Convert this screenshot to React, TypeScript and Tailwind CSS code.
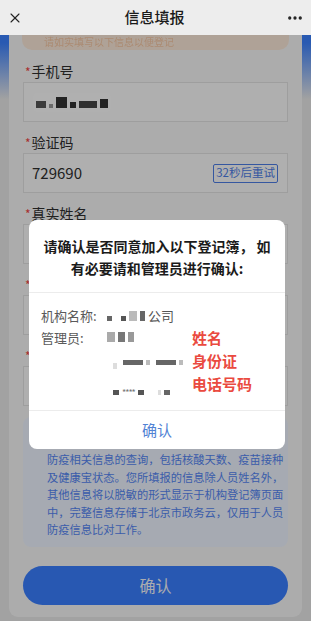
import { X, MoreHorizontal, ChevronRight } from "lucide-react";

const fields = [
  { label: "手机号", kind: "masked" },
  { label: "验证码", kind: "code" },
  { label: "真实姓名", kind: "empty" },
  { label: "身份证号", kind: "select" },
  { label: "所在单位", kind: "empty" },
];

const notice = [
  "防疫相关信息的查询，包括核酸天数、疫苗接种",
  "及健康宝状态。您所填报的信息除人员姓名外，",
  "其他信息将以脱敏的形式显示于机构登记簿页面",
  "中，完整信息存储于北京市政务云，仅用于人员",
  "防疫信息比对工作。",
];

function Mosaic({ cells }: { cells: { w: number; h: number; c: string }[] }) {
  return (
    <div className="flex items-end gap-[3px] blur-[0.6px]">
      {cells.map((cell, i) => (
        <span key={i} className="block" style={{ width: cell.w, height: cell.h, background: cell.c }} />
      ))}
    </div>
  );
}

function Field({ label, kind }: { label: string; kind: string }) {
  return (
    <div className="mb-[10px]">
      <div className="flex h-[21px] items-center text-[14px] leading-[21px] text-[#2e2e2e]">
        <span className="ml-[2px] mr-[1px] text-[12px] text-[#f04444]">*</span>
        <span>{label}</span>
      </div>
      <div className="flex h-[40px] items-center justify-between border border-[#e2e2e2] bg-[#fbfbfb] pl-[8px] pr-[9px]">
        {kind === "masked" && (
          <div className="ml-[1px] rounded-[5px] bg-[#fdfdfd] px-[3px] py-[4px]">
            <Mosaic
              cells={[
                { w: 10, h: 7, c: "#555" },
                { w: 4, h: 4, c: "#999" },
                { w: 11, h: 11, c: "#333" },
                { w: 6, h: 6, c: "#333" },
                { w: 18, h: 7, c: "#444" },
                { w: 8, h: 9, c: "#333" },
              ]}
            />
          </div>
        )}
        {kind === "code" && (
          <>
            <span className="text-[15px] text-[#2e2e2e]">729690</span>
            <span className="flex h-[19px] items-center rounded-[2px] border border-[#4d7de6] px-[2px] text-[11.5px] text-[#4d7de6]">
              32秒后重试
            </span>
          </>
        )}
        {kind === "select" && (
          <ChevronRight className="ml-auto mr-[-5px] h-[10px] w-[10px] text-[#555]" strokeWidth={2.4} />
        )}
      </div>
    </div>
  );
}

export default function App() {
  return (
    <div
      className="relative h-[621px] w-[311px] overflow-hidden bg-[#e8e8e8]"
      style={{ fontFamily: '"Noto Sans CJK SC", "Noto Sans", sans-serif' }}
    >
      <header className="relative z-30 flex h-[35px] items-center justify-between bg-[#ededed] px-[7px]">
        <X className="h-[16px] w-[16px] text-[#222]" strokeWidth={1.6} />
        <span className="text-[15px] font-medium text-[#1a1a1a]">信息填报</span>
        <MoreHorizontal className="h-[18px] w-[18px] text-[#222]" strokeWidth={2.4} />
      </header>

      <main className="h-[586px] bg-[linear-gradient(180deg,#3c82ff_0px,#3c82ff_8px,#e8e8e8_64px)] px-[9px]">
        <div className="rounded-b-[9px] bg-[#f7f7f7] px-[14px] pb-[12px]">
          <div className="mx-[-1px] h-[15px] overflow-hidden rounded-b-[10px] bg-[#fbe9d9] px-[22px] pt-[1px]">
            <p className="text-[10px] leading-[11px] text-[#f2b080] opacity-60">请如实填写以下信息以便登记</p>
          </div>

          <div className="mt-[11px]">
            {fields.map((f) => (
              <Field key={f.label} label={f.label} kind={f.kind} />
            ))}
          </div>

          <div className="mt-[11px] rounded-[8px] bg-[#eef4ff] pb-[8px] pl-[24px] pr-[8px] pt-[7px] text-[11.25px] leading-[17.5px] text-[#5586f4]">
            <div className="h-[27px] whitespace-nowrap">您所提交的信息仅用于本机构登记簿中人员</div>
            {notice.map((line) => (
              <div key={line} className="whitespace-nowrap">
                {line}
              </div>
            ))}
          </div>

          <button className="mt-[19px] flex h-[39px] w-full items-center justify-center rounded-full bg-[#3a7eff] text-[16px] text-[#f4f6fb]">
            确认
          </button>
        </div>
      </main>

      <div className="absolute inset-x-0 bottom-0 top-[35px] z-10 bg-black/30" />

      <div className="absolute left-[29px] top-[220px] z-20 w-[256px] overflow-hidden rounded-[8px] bg-white">
        <div className="px-[12px] pb-[13px] pt-[15px] text-center text-[14px] font-bold leading-[22px] text-[#1b1b1b]">
          <div>请确认是否同意加入以下登记簿， 如</div>
          <div>有必要请和管理员进行确认:</div>
        </div>
        <div className="h-px bg-[#ececec]" />
        <div className="relative h-[117px] pl-[12px] pt-[12px] text-[13px] leading-[22px] text-[#5a5a5a]">
          <div className="flex items-center">
            <span className="w-[66px]">机构名称:</span>
            <div className="flex items-center gap-[3px]">
              <Mosaic
                cells={[
                  { w: 5, h: 5, c: "#666" },
                  { w: 3, h: 3, c: "#fff" },
                  { w: 5, h: 5, c: "#555" },
                  { w: 8, h: 10, c: "#bbb" },
                  { w: 5, h: 10, c: "#666" },
                ]}
              />
              <span className="text-[#555]">公司</span>
            </div>
          </div>
          <div className="flex items-start">
            <span className="w-[66px]">管理员:</span>
            <div className="mt-[5px]">
              <Mosaic
                cells={[
                  { w: 8, h: 10, c: "#aaa" },
                  { w: 7, h: 10, c: "#777" },
                  { w: 6, h: 10, c: "#999" },
                ]}
              />
            </div>
          </div>
          <div className="ml-[72px] mt-[6px] flex flex-col gap-[19px]">
            <div className="flex items-center gap-[6px]">
              <span className="mt-[8px] block h-[6px] w-[4px] bg-[#ddd]" />
              <Mosaic cells={[{ w: 20, h: 5, c: "#666" }, { w: 4, h: 5, c: "#bbb" }]} />
              <Mosaic cells={[{ w: 20, h: 5, c: "#666" }, { w: 4, h: 5, c: "#bbb" }]} />
            </div>
            <div className="flex items-center gap-[3px]">
              <Mosaic cells={[{ w: 6, h: 5, c: "#555" }]} />
              <span className="text-[9px] leading-[9px] tracking-[-1px] text-[#777]">****</span>
              <Mosaic cells={[{ w: 6, h: 5, c: "#555" }]} />
              <span className="w-[8px]" />
              <Mosaic cells={[{ w: 3, h: 5, c: "#ddd" }, { w: 6, h: 5, c: "#666" }]} />
            </div>
          </div>
          <div className="absolute left-[163px] top-[33px] text-[15px] font-bold leading-[23px] text-[#ea4a40]">
            <div>姓名</div>
            <div>身份证</div>
            <div>电话号码</div>
          </div>
        </div>
        <div className="h-px bg-[#ececec]" />
        <button className="flex h-[38px] w-full items-center justify-center text-[15px] text-[#5182d4]">
          确认
        </button>
      </div>
    </div>
  );
}
